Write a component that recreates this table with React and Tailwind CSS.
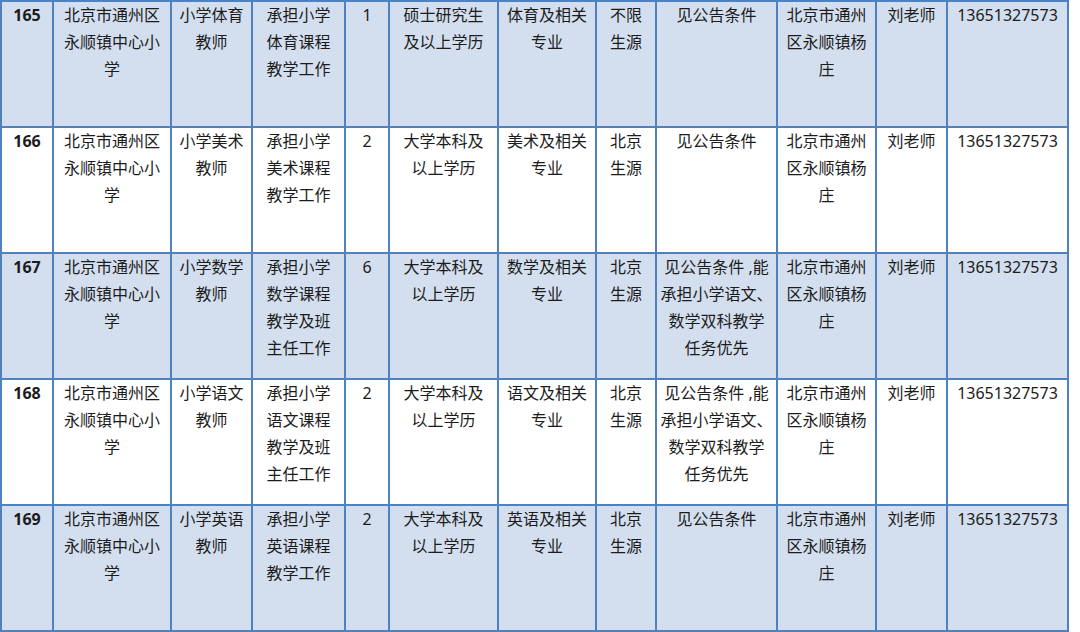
const COLS = [52, 118, 81, 93, 44, 109, 98, 60, 121, 99, 71, 121]

const ROWS = [
  {
    no: '165', school: ['北京市通州区', '永顺镇中心小', '学'], post: ['小学体育', '教师'],
    duty: ['承担小学', '体育课程', '教学工作'], num: '1', edu: ['硕士研究生', '及以上学历'],
    major: ['体育及相关', '专业'], src: ['不限', '生源'], cond: ['见公告条件'],
  },
  {
    no: '166', school: ['北京市通州区', '永顺镇中心小', '学'], post: ['小学美术', '教师'],
    duty: ['承担小学', '美术课程', '教学工作'], num: '2', edu: ['大学本科及', '以上学历'],
    major: ['美术及相关', '专业'], src: ['北京', '生源'], cond: ['见公告条件'],
  },
  {
    no: '167', school: ['北京市通州区', '永顺镇中心小', '学'], post: ['小学数学', '教师'],
    duty: ['承担小学', '数学课程', '教学及班', '主任工作'], num: '6', edu: ['大学本科及', '以上学历'],
    major: ['数学及相关', '专业'], src: ['北京', '生源'],
    cond: ['见公告条件 ,能', '承担小学语文、', '数学双科教学', '任务优先'],
  },
  {
    no: '168', school: ['北京市通州区', '永顺镇中心小', '学'], post: ['小学语文', '教师'],
    duty: ['承担小学', '语文课程', '教学及班', '主任工作'], num: '2', edu: ['大学本科及', '以上学历'],
    major: ['语文及相关', '专业'], src: ['北京', '生源'],
    cond: ['见公告条件 ,能', '承担小学语文、', '数学双科教学', '任务优先'],
  },
  {
    no: '169', school: ['北京市通州区', '永顺镇中心小', '学'], post: ['小学英语', '教师'],
    duty: ['承担小学', '英语课程', '教学工作'], num: '2', edu: ['大学本科及', '以上学历'],
    major: ['英语及相关', '专业'], src: ['北京', '生源'], cond: ['见公告条件'],
  },
]

const ADDR = ['北京市通州', '区永顺镇杨', '庄']

function Lines({ lines }) {
  return lines.map((l, i) => <div key={i} className="whitespace-nowrap">{l}</div>)
}

export default function App() {
  return (
    <div className="w-[1080px] h-[632px] bg-white overflow-hidden text-[#1c1c1c]" style={{ fontFamily: '"Noto Sans", "Noto Sans CJK SC", sans-serif' }}>
      <table className="table-fixed border-collapse text-[16px] leading-[27px]" style={{ width: 1069 }}>
        <colgroup>
          {COLS.map((w, i) => <col key={i} style={{ width: w }} />)}
        </colgroup>
        <tbody>
          {ROWS.map((r, i) => (
            <tr key={r.no} className={`h-[126px] align-top ${i % 2 === 0 ? 'bg-[#d3dfee]' : 'bg-white'}`}>
              <td className="border-2 border-[#4f81bd] text-center font-bold px-0 pt-0">{r.no}</td>
              <td className="border-2 border-[#4f81bd] text-center pt-0"><Lines lines={r.school} /></td>
              <td className="border-2 border-[#4f81bd] text-center pt-0"><Lines lines={r.post} /></td>
              <td className="border-2 border-[#4f81bd] text-center pt-0"><Lines lines={r.duty} /></td>
              <td className="border-2 border-[#4f81bd] text-center pt-0">{r.num}</td>
              <td className="border-2 border-[#4f81bd] text-center pt-0"><Lines lines={r.edu} /></td>
              <td className="border-2 border-[#4f81bd] text-center pt-0"><Lines lines={r.major} /></td>
              <td className="border-2 border-[#4f81bd] text-center pt-0"><Lines lines={r.src} /></td>
              <td className="border-2 border-[#4f81bd] text-center pt-0"><Lines lines={r.cond} /></td>
              <td className="border-2 border-[#4f81bd] text-center pt-0"><Lines lines={ADDR} /></td>
              <td className="border-2 border-[#4f81bd] text-center pt-0">刘老师</td>
              <td className="border-2 border-[#4f81bd] text-center pt-0">13651327573</td>
            </tr>
          ))}
        </tbody>
      </table>
    </div>
  )
}
